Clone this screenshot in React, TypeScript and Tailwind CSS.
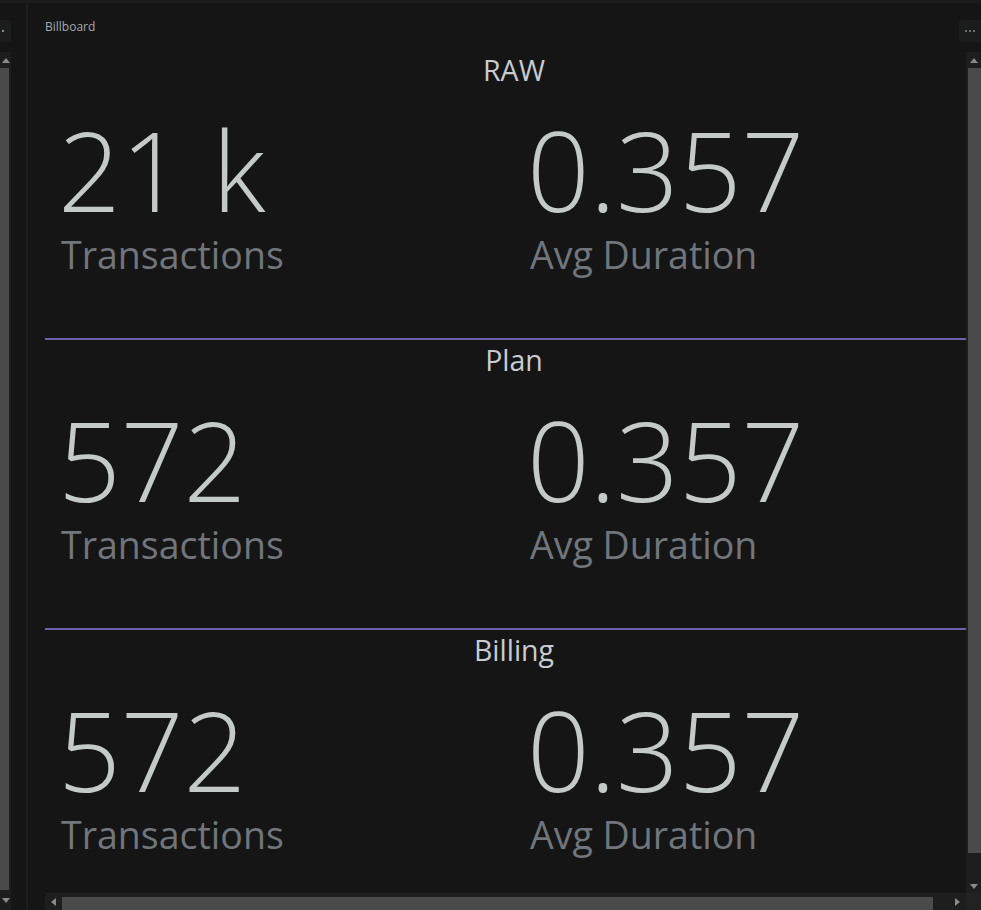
const sections = [
  { title: "RAW", count: "21 k", avg: "0.357" },
  { title: "Plan", count: "572", avg: "0.357" },
  { title: "Billing", count: "572", avg: "0.357" },
];

function Stat({ value, label }: { value: string; label: string }) {
  return (
    <div className="flex flex-col">
      <div className="-ml-[3px] text-[110px] leading-[110px] font-light text-[#c3cac8]">{value}</div>
      <div className="mt-[12px] text-[37.5px] leading-[38px] text-[#70767c]">{label}</div>
    </div>
  );
}

function Arrow({ dir }: { dir: "up" | "down" | "left" | "right" }) {
  const pts = {
    up: "0,5 4,0 8,5",
    down: "0,0 8,0 4,5",
    left: "5,0 5,8 0,4",
    right: "0,0 5,4 0,8",
  }[dir];
  const w = dir === "up" || dir === "down" ? 8 : 5;
  const h = dir === "up" || dir === "down" ? 5 : 8;
  return (
    <svg width={w} height={h} viewBox={`0 0 ${w} ${h}`}>
      <polygon points={pts} fill="#8a8a8a" />
    </svg>
  );
}

export default function App() {
  return (
    <div
      className="w-[981px] h-[910px] overflow-hidden bg-[#151515] flex flex-col"
      style={{ fontFamily: '"Open Sans", "Liberation Sans", sans-serif' }}
    >
      <div className="h-[3px] bg-[#1c1c1c] shrink-0" />
      <div className="flex flex-1 min-h-0">
        {/* left panel */}
        <div className="w-[26px] flex flex-col">
          <div className="mt-[17px] w-[11px] h-[22px] bg-[#1b1d1d] rounded-r-[3px] flex items-center pl-[2px]">
            <div className="w-[2px] h-[2px] bg-[#8a8a8a]" />
          </div>
          <div className="mt-[10px] w-[11px] flex-1 bg-[#1d1d1d] flex flex-col items-center">
            <div className="h-[16px] flex items-center justify-center">
              <Arrow dir="up" />
            </div>
            <div className="w-[9px] self-start flex-1 bg-[#4a4a4a]" />
            <div className="h-[20px] flex items-center justify-center">
              <Arrow dir="down" />
            </div>
          </div>
        </div>
        <div className="w-[2px] bg-[#1d1d1d]" />
        <div className="w-[1px]" />

        {/* main panel */}
        <div className="flex-1 flex flex-col min-w-0">
          <div className="h-[47px] flex justify-between items-start shrink-0">
            <div className="pl-[16px] pt-[17px] text-[12px] leading-[14px] text-[#a4a9ae]">Billboard</div>
            <div className="mt-[17px] w-[22px] h-[22px] bg-[#1b1d1d] rounded-l-[3px] flex items-center justify-center gap-[2px]">
              <div className="w-[2px] h-[2px] bg-[#6c6c6c]" />
              <div className="w-[2px] h-[2px] bg-[#6c6c6c]" />
              <div className="w-[2px] h-[2px] bg-[#6c6c6c]" />
            </div>
          </div>

          <div className="flex flex-1 min-h-0">
            <div className="flex-1 pl-[16px] overflow-hidden">
              <div className="w-[938px]">
                {sections.map((s) => (
                  <div key={s.title} className="flex flex-col">
                    <div className="pt-[6px] text-center text-[28.5px] leading-[29px] text-[#c8ccd0]">{s.title}</div>
                    <div className="mt-[29px] flex">
                      <div className="w-[469px] pl-[16px]">
                        <Stat value={s.count} label="Transactions" />
                      </div>
                      <div className="pl-[16px]">
                        <Stat value={s.avg} label="Avg Duration" />
                      </div>
                    </div>
                    <div className="mt-[64px] h-[2px] bg-[#6a62ad]" />
                  </div>
                ))}
              </div>
            </div>
            <div className="w-[15px] bg-[#1e1e1e] flex flex-col items-center mt-[2px]">
              <div className="h-[16px] flex items-center justify-center">
                <Arrow dir="up" />
              </div>
              <div className="w-[13px] self-end flex-1 bg-[#4a4a4a] mb-[26px]" />
              <div className="h-[14px] flex items-center justify-center">
                <Arrow dir="down" />
              </div>
            </div>
          </div>

          <div className="h-[17px] flex shrink-0">
            <div className="w-[16px]" />
            <div className="flex-1 bg-[#1e1e1e] flex items-center">
              <div className="w-[17px] flex items-center justify-center">
                <Arrow dir="left" />
              </div>
              <div className="flex-1 h-[13px] self-end bg-[#4a4a4a] mr-[16px]" />
              <div className="w-[17px] flex items-center justify-center">
                <Arrow dir="right" />
              </div>
            </div>
            <div className="w-[15px] bg-[#222222]" />
          </div>
        </div>
      </div>
    </div>
  );
}
